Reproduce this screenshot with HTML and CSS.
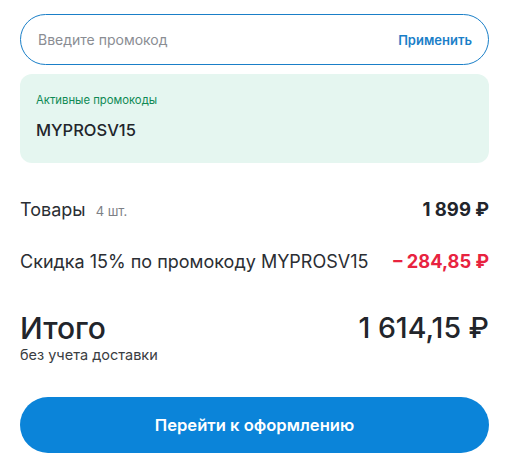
FILE: index.html
```html
<!DOCTYPE html>
<html lang="ru">
<head>
<meta charset="utf-8">
<link rel="stylesheet" href="styles.css">
</head>
<body>
<div class="summary">
  <div class="promo-input">
    <span class="placeholder">Введите промокод</span>
    <span class="apply">Применить</span>
  </div>
  <div class="active">
    <div class="active-title">Активные промокоды</div>
    <div class="active-code">MYPROSV15</div>
  </div>
  <div class="row row-goods">
    <div class="label">Товары <span class="qty">4 шт.</span></div>
    <div class="value">1 899 ₽</div>
  </div>
  <div class="row row-discount">
    <div class="label">Скидка 15% по промокоду MYPROSV15</div>
    <div class="value discount">– 284,85 ₽</div>
  </div>
  <div class="total">
    <div class="total-left">
      <div class="total-title">Итого</div>
      <div class="total-note">без учета доставки</div>
    </div>
    <div class="total-value">1 614,15 ₽</div>
  </div>
  <button class="checkout">Перейти к оформлению</button>
</div>
</body>
</html>
```
FILE: styles.css
```css
* { box-sizing: border-box; }
body {
  margin: 0;
  background: #fff;
  font-family: Inter, "Noto Sans", sans-serif;
  color: #22252b;
}
.summary {
  width: 469px;
  margin: 14px 0 0 20px;
  display: flex;
  flex-direction: column;
}
.promo-input {
  height: 51px;
  border: 1px solid #1a7fc8;
  border-radius: 26px;
  display: flex;
  align-items: center;
  justify-content: space-between;
  padding: 0 16px 0 17px;
}
.placeholder {
  font-size: 14px;
  color: #8a8d93;
}
.apply {
  font-size: 13px;
  font-weight: 600;
  color: #1a7fc8;
}
.active {
  margin-top: 9px;
  height: 89px;
  background: #e5f6f0;
  border-radius: 12px;
  padding: 19px 16px 0;
}
.active-title {
  font-size: 11.3px;
  color: #0f8a55;
  line-height: 14px;
}
.active-code {
  margin-top: 13px;
  font-size: 16.5px;
  font-weight: 500;
  line-height: 20px;
  color: #22252b;
}
.row {
  display: flex;
  justify-content: space-between;
  align-items: baseline;
}
.row-goods { margin-top: 35px; }
.row-discount { margin-top: 28px; }
.label {
  font-size: 18px;
  line-height: 22px;
  color: #2b2e33;
}
.qty {
  font-size: 13px;
  color: #7d8086;
  margin-left: 5px;
}
.value {
  font-size: 18.5px;
  font-weight: 700;
  line-height: 22px;
  color: #22252b;
}
.discount { color: #e8233f; font-size: 18.3px; }
.total {
  margin-top: 39px;
  display: flex;
  justify-content: space-between;
  align-items: flex-start;
}
.total-title {
  font-size: 30px;
  font-weight: 500;
  line-height: 32px;
}
.total-note {
  margin-top: 2px;
  font-size: 14.5px;
  color: #3a3d42;
  line-height: 18px;
}
.total-value {
  font-size: 28.5px;
  font-weight: 500;
  line-height: 32px;
}
.checkout {
  margin-top: 33px;
  height: 56px;
  border: none;
  border-radius: 28px;
  background: #0b84d9;
  color: #fff;
  font-family: inherit;
  font-size: 16.6px;
  font-weight: 600;
}
```
